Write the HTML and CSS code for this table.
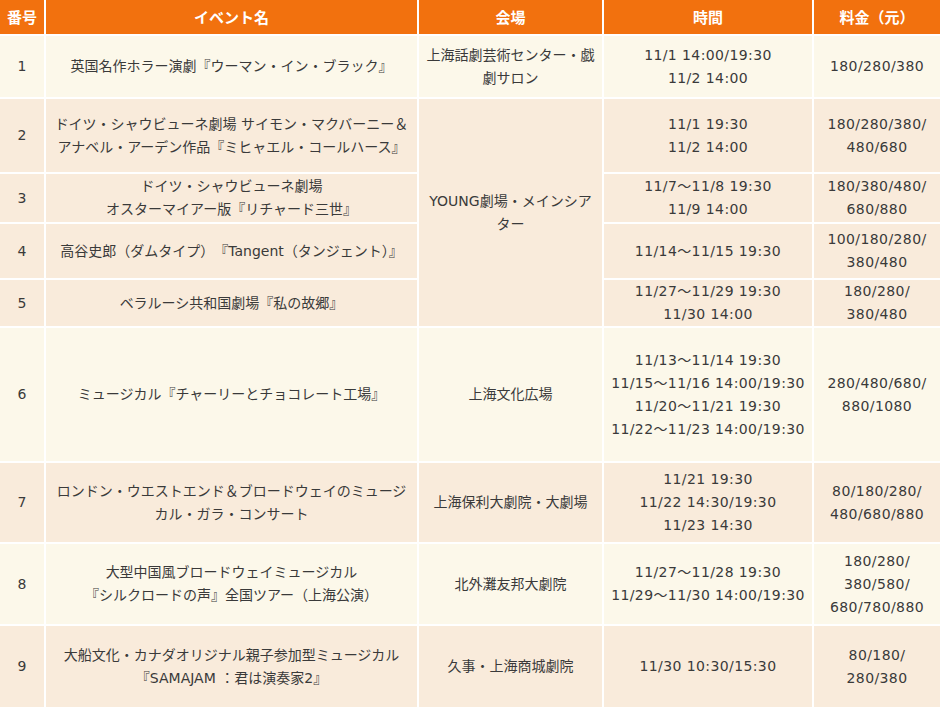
FILE: index.html
```html
<!DOCTYPE html>
<html lang="ja">
<head>
<meta charset="utf-8">
<title>公演スケジュール</title>
<link rel="stylesheet" href="styles.css">
</head>
<body>
<table class="schedule">
  <colgroup>
    <col class="c-no">
    <col class="c-title">
    <col class="c-venue">
    <col class="c-time">
    <col class="c-price">
  </colgroup>
  <thead>
    <tr class="head">
      <th>番号</th>
      <th>イベント名</th>
      <th>会場</th>
      <th>時間</th>
      <th>料金（元）</th>
    </tr>
  </thead>
  <tbody>
    <tr class="cream r1">
      <td>1</td>
      <td>英国名作ホラー演劇『ウーマン・イン・ブラック』</td>
      <td>上海話劇芸術センター・戯<br>劇サロン</td>
      <td class="t">11/1 14:00/19:30<br>11/2 14:00</td>
      <td class="p">180/280/380</td>
    </tr>
    <tr class="peach r2">
      <td>2</td>
      <td>ドイツ・シャウビューネ劇場 サイモン・マクバーニー＆<br>アナベル・アーデン作品『ミヒャエル・コールハース』</td>
      <td rowspan="4" class="venue-span">YOUNG劇場・メインシア<br>ター</td>
      <td class="t">11/1 19:30<br>11/2 14:00</td>
      <td class="p">180/280/380/<br>480/680</td>
    </tr>
    <tr class="peach r3">
      <td>3</td>
      <td>ドイツ・シャウビューネ劇場<br>オスターマイアー版『リチャード三世』</td>
      <td class="t">11/7～11/8 19:30<br>11/9 14:00</td>
      <td class="p">180/380/480/<br>680/880</td>
    </tr>
    <tr class="peach r4">
      <td>4</td>
      <td>高谷史郎（ダムタイプ）　『Tangent（タンジェント）』</td>
      <td class="t">11/14～11/15 19:30</td>
      <td class="p">100/180/280/<br>380/480</td>
    </tr>
    <tr class="peach r5">
      <td>5</td>
      <td>ベラルーシ共和国劇場『私の故郷』</td>
      <td class="t">11/27～11/29 19:30<br>11/30 14:00</td>
      <td class="p">180/280/<br>380/480</td>
    </tr>
    <tr class="cream r6">
      <td>6</td>
      <td>ミュージカル『チャーリーとチョコレート工場』</td>
      <td>上海文化広場</td>
      <td class="t">11/13～11/14 19:30<br>11/15～11/16 14:00/19:30<br>11/20～11/21 19:30<br>11/22～11/23 14:00/19:30</td>
      <td class="p">280/480/680/<br>880/1080</td>
    </tr>
    <tr class="peach r7">
      <td>7</td>
      <td>ロンドン・ウエストエンド＆ブロードウェイのミュージ<br>カル・ガラ・コンサート</td>
      <td>上海保利大劇院・大劇場</td>
      <td class="t">11/21 19:30<br>11/22 14:30/19:30<br>11/23 14:30</td>
      <td class="p">80/180/280/<br>480/680/880</td>
    </tr>
    <tr class="cream r8">
      <td>8</td>
      <td>大型中国風ブロードウェイミュージカル<br>『シルクロードの声』全国ツアー（上海公演）</td>
      <td>北外灘友邦大劇院</td>
      <td class="t">11/27～11/28 19:30<br>11/29～11/30 14:00/19:30</td>
      <td class="p">180/280/<br>380/580/<br>680/780/880</td>
    </tr>
    <tr class="peach r9">
      <td>9</td>
      <td>大船文化・カナダオリジナル親子参加型ミュージカル<br>『SAMAJAM ：君は演奏家2』</td>
      <td>久事・上海商城劇院</td>
      <td class="t">11/30 10:30/15:30</td>
      <td class="p">80/180/<br>280/380</td>
    </tr>
  </tbody>
</table>
</body>
</html>
```
FILE: styles.css
```css
html, body {
  margin: 0;
  padding: 0;
  background: #ffffff;
  overflow: hidden;
}

.schedule {
  margin: -2px;
  width: 944px;
  table-layout: fixed;
  border-collapse: separate;
  border-spacing: 2px;
  background: #ffffff;
  font-family: "DejaVu Sans", "Noto Sans CJK JP", sans-serif;
  font-size: 14px;
  line-height: 23px;
  color: #3a3a3a;
}

.c-no { width: 44px; }
.c-title { width: 371px; }
.c-venue { width: 183px; }
.c-time { width: 208px; }
.c-price { width: 126px; }

.schedule th,
.schedule td {
  padding: 0 2px;
  text-align: center;
  vertical-align: middle;
  white-space: nowrap;
}

.schedule td.t,
.schedule td.p {
  letter-spacing: 0.4px;
}

.head th {
  height: 34px;
  background: #f2710e;
  color: #ffffff;
  font-weight: bold;
  font-size: 15px;
  font-family: "Noto Sans CJK JP", sans-serif;
  line-height: 20px;
}

.cream td { background: #fcf8ea; }
.peach td { background: #f9ebdb; }
.venue-span { background: #f9ebdb; }

.r1 td { height: 61px; }
.r2 td { height: 73px; }
.r3 td { height: 48px; }
.r4 td { height: 54px; }
.r5 td { height: 46px; }
.r6 td { height: 133px; }
.r7 td { height: 79px; }
.r8 td { height: 80px; }
.r9 td { height: 81px; }
```
